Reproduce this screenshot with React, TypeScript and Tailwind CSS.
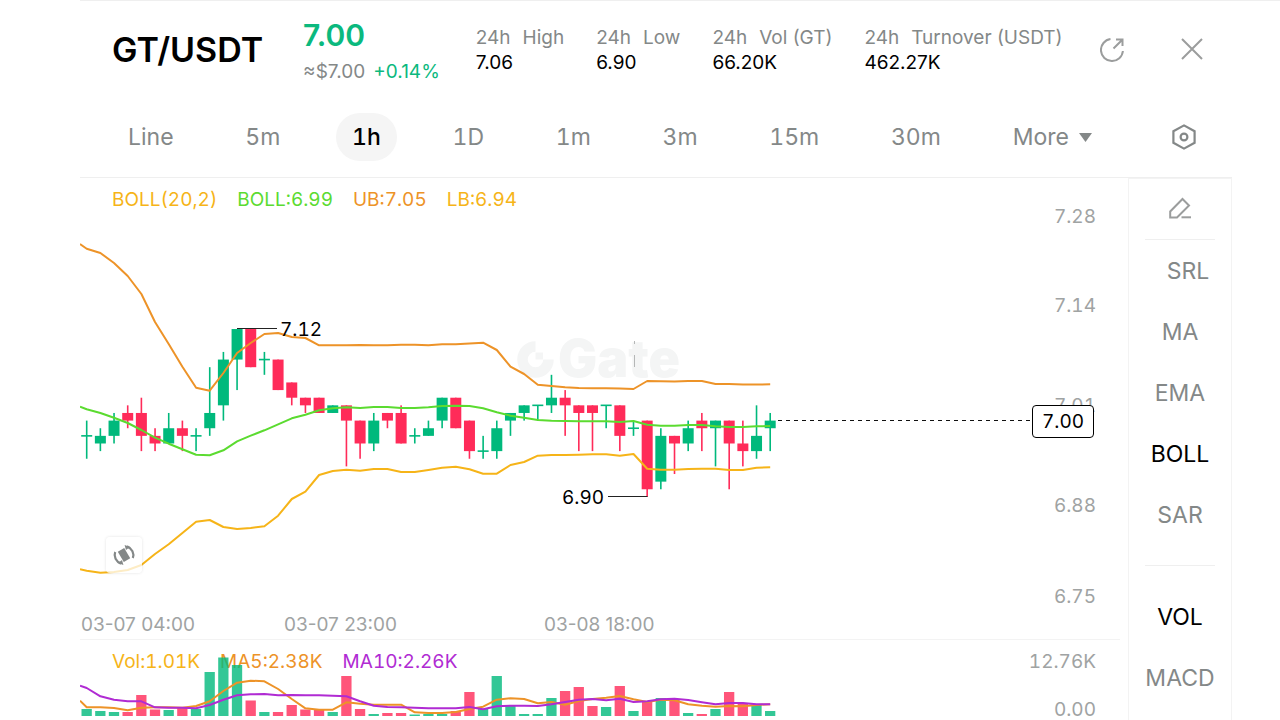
import { useState } from 'react'

// [open, close, high, low] in cents relative to 7.00
const CANDLES: [number, number, number, number][] = [
  [-2, -2, 0, -5], [-3, -2, -1, -4], [-2, 0, 1, -3], [1, 0, 2, -1], [1, -2, 3, -4],
  [-2, -3, -1, -4], [-3, -1, 1, -3], [-1, -2, 0, -4], [-2, -2, -1, -4], [-1, 1, 7, -2],
  [2, 8, 9, 0], [8, 12, 12, 4], [12, 7, 12, 7], [8, 8, 9, 6], [8, 4, 8, 4],
  [5, 3, 5, 2], [3, 2, 3, 1], [3, 1, 3, 1], [1, 2, 2, 1], [2, 0, 2, -6],
  [0, -3, 0, -5], [-3, 0, 1, -4], [1, 0, 1, -1], [1, -3, 2, -3], [-2, -2, -1, -3],
  [-2, -1, 0, -2], [0, 3, 3, -1], [3, -1, 3, -1], [0, -4, 0, -5], [-4, -4, -2, -5],
  [-4, -1, 0, -5], [0, 1, 1, -2], [1, 2, 2, 0], [2, 2, 2, 0], [2, 3, 6, 1],
  [3, 2, 4, -2], [2, 1, 2, -4], [2, 1, 2, -4], [2, 2, 2, -1], [2, -2, 2, -4],
  [-1, -1, 0, -2], [0, -9, 0, -10], [-8, -2, -1, -9], [-2, -3, -2, -7], [-3, -1, 0, -4],
  [0, -1, 1, -4], [-1, 0, 0, -6], [0, -3, 0, -9], [-3, -4, 0, -6], [-4, -2, 2, -5],
  [-1, 0, 1, -4],
]

// the first value of every line sits on the left edge, the rest on the candles
const UB = [66, 70.7, 75, 85, 98, 116, 144, 166, 188.7, 209.7, 212.7, 195, 175, 165, 156, 155, 159, 160, 167.3, 167.3, 167.3, 167, 167.3, 167.3, 166.7, 166.7, 167.3, 166.3, 166.3, 165.5, 164.7, 172, 188.7, 196, 206.7, 208, 209.3, 210, 210.3, 210.3, 210.5, 211, 203, 203.3, 203.5, 203, 203, 206, 206, 206.6, 206.6, 206.3]
const MID = [228.7, 231.3, 235, 239.7, 245, 252, 259.7, 265.7, 271.3, 276.7, 277.3, 272.3, 263.3, 257.7, 252.3, 246.3, 240.3, 236.7, 232.3, 230.3, 229.3, 230, 229, 229, 230, 230, 229.3, 228, 227.7, 228, 230.3, 234.3, 237.7, 239.7, 242, 242.7, 243, 243.3, 243.3, 243.3, 244, 243, 246.7, 247.7, 247.7, 247, 247, 248.3, 249, 249, 248.3, 248]
const LB = [391.3, 392.7, 394.7, 394, 392, 387, 376, 366.3, 355, 343.7, 342, 349, 351, 350, 348.3, 337.7, 321, 313.7, 297, 293, 291.7, 292.7, 291, 291, 294, 294, 292, 289.7, 288.7, 291.3, 295.7, 295.7, 287, 284, 277.7, 277, 277, 276.7, 276.3, 276.3, 277.7, 276, 290.7, 291.7, 291.7, 291, 290.7, 290.7, 292, 292, 289.7, 289.3]

const VOLUMES = [7, 5, 4, 4, 21, 6.5, 6, 8, 7, 44, 58.5, 51, 15.5, 4, 4, 11, 6.5, 6, 4, 40, 7, 2, 3, 3, 1.5, 2, 2, 5, 24, 7, 40, 10, 2, 2, 18, 25, 29, 10, 9, 30, 5, 14, 18, 16, 3, 2, 7, 24, 12, 11, 5]
const MA5 = [60.7, 67.3, 67.3, 68, 70.3, 67.7, 67.3, 67.3, 67.7, 66, 61.3, 51, 42.7, 40.7, 41.3, 49, 59, 68.3, 69.7, 69.7, 62.3, 63.7, 64.7, 64.7, 64.7, 72.3, 73, 73, 72, 69, 66.7, 59.7, 58.3, 59, 63.3, 62, 64.7, 61, 59, 57.7, 56, 59.3, 62, 59.7, 60.3, 64.3, 65.7, 66.7, 66, 66.3, 65, 64.3]
const MA10 = [45.7, 48, 56.3, 59.7, 61.3, 61.3, 67.3, 67.7, 67.7, 68.3, 65, 59.7, 55.3, 54.3, 54, 55.3, 55, 55.3, 55.3, 55.7, 56.3, 61.3, 65.7, 67, 67.3, 67.7, 68.3, 68.3, 68.3, 67, 69.3, 66.3, 65.7, 65.7, 66, 64.3, 62, 59.7, 59, 60.3, 58.7, 62, 61.3, 59.3, 58.7, 60, 62.3, 64.3, 63, 63, 64.3, 64.3]

const UP = '#00b97c'
const DOWN = '#ff2b59'
const STEP = 13.67

const xAt = (i: number) => 6.7 + i * STEP
const yAt = (cents: number) => 242.6 - cents * 7.63

function linePath(values: number[]): string {
  return values.map((y, i) => `${i === 0 ? `M0` : `L${xAt(i - 1).toFixed(1)}`} ${y}`).join('')
}

const INTERVALS = ['Line', '5m', '1h', '1D', '1m', '3m', '15m', '30m']
const MAIN_INDICATORS = ['SRL', 'MA', 'EMA', 'BOLL', 'SAR']
const SUB_INDICATORS = ['VOL', 'MACD']

const STATS = [
  { label: 'High', value: '7.06' },
  { label: 'Low', value: '6.90' },
  { label: 'Vol (GT)', value: '66.20K' },
  { label: 'Turnover (USDT)', value: '462.27K' },
]

const PRICE_TICKS = [
  { label: '7.28', y: 39 },
  { label: '7.14', y: 128 },
  { label: '7.01', y: 228 },
  { label: '6.88', y: 328 },
  { label: '6.75', y: 419 },
]

function ShareIcon() {
  return (
    <svg viewBox="0 0 24 24" className="size-6" fill="none" stroke="#9b9d9d" strokeWidth="2">
      <path d="M10.5 1.1A11 11 0 1 0 22.9 13" />
      <path d="M13.5 10.5 22.3 1.7M16 1.5h6.5V8" />
    </svg>
  )
}

function CloseIcon() {
  return (
    <svg viewBox="0 0 24 24" className="size-6" fill="none" stroke="#9b9d9d" strokeWidth="2">
      <path d="M2 1 22 21M22 1 2 21" />
    </svg>
  )
}

function SettingsIcon() {
  return (
    <svg viewBox="0 0 24 26" className="h-[26px] w-6" fill="none" stroke="#848888" strokeWidth="2.2">
      <path d="M12 1.4 22.6 7.2V18.8L12 24.6 1.4 18.8V7.2Z" />
      <circle cx="12" cy="13" r="3.4" />
    </svg>
  )
}

function PenIcon() {
  return (
    <svg viewBox="0 0 24 24" className="size-6" fill="none" stroke="#9b9d9d" strokeWidth="2">
      <path d="M2.2 20.5V14.5L14.5 2 21 8.5 9 20.5Z" />
      <path d="M13.5 20.3H23" />
    </svg>
  )
}

function RotateIcon() {
  return (
    <svg viewBox="0 0 24 24" className="size-6">
      <rect x="8.3" y="6" width="7.4" height="12" fill="#848888" transform="rotate(-30 12 12)" />
      <path d="M3.2 9C1.4 13.5 4 18.8 9 20.6" fill="none" stroke="#848888" strokeWidth="2.2" />
      <path d="M11.4 22 10 17 6 20Z" fill="#848888" />
      <path d="M20.8 15C22.6 10.5 20 5.2 15 3.4" fill="none" stroke="#848888" strokeWidth="2.2" />
      <path d="M12.6 2 14 7 18 4Z" fill="#848888" />
    </svg>
  )
}

function Watermark() {
  return (
    <div className="absolute top-[157px] left-[437px] flex items-center gap-1">
      <svg viewBox="0 0 37 37" className="size-[37px]">
        <path d="M18.5 5.5A13 13 0 1 0 31.5 18.5" fill="none" stroke="#f4f5f5" strokeWidth="10.5" />
        <path d="M18.5 11.5H26V18.5H18.5Z" fill="#f4f5f5" />
      </svg>
      <span className="text-[52px] leading-[48px] font-black text-[#f4f5f5]">Gate</span>
    </div>
  )
}

function CandleChart() {
  return (
    <svg className="absolute inset-0 h-full w-full">
      <path d="M554.5 163V166M554.5 177V189" stroke="#b5b7b7" />
      {CANDLES.map(([open, close, high, low], i) => {
        const color = close >= open ? UP : DOWN
        const top = yAt(Math.max(open, close))
        const height = Math.abs(open - close) * 7.63
        return (
          <g key={i} fill={color}>
            <rect x={xAt(i) - 0.8} y={yAt(high)} width={1.6} height={yAt(low) - yAt(high)} />
            <rect x={xAt(i) - 5.5} y={height ? top : top - 0.8} width={11} height={height || 1.6} />
          </g>
        )
      })}
      <g fill="none" strokeWidth="2" strokeLinejoin="round">
        <path d={linePath(LB)} stroke="#f6b418" />
        <path d={linePath(MID)} stroke="#5bdb30" />
        <path d={linePath(UB)} stroke="#ed9328" />
      </g>
      <path d="M157 150.5H197M528 318.5H567.5" stroke="#222" strokeWidth="1.2" />
      <line x1="698" y1="242.5" x2="100%" y2="242.5" stroke="#111" strokeWidth="1.2" strokeDasharray="4 4" />
    </svg>
  )
}

function VolumeChart() {
  return (
    <svg className="absolute inset-0 h-full w-full">
      {VOLUMES.map((v, i) => (
        <rect
          key={i}
          x={xAt(i) - 5.2}
          y={76 - v}
          width={10.3}
          height={v}
          fill={CANDLES[i][1] >= CANDLES[i][0] ? UP : DOWN}
          opacity={0.8}
        />
      ))}
      <g fill="none" strokeWidth="2" strokeLinejoin="round">
        <path d={linePath(MA5)} stroke="#ed9328" />
        <path d={linePath(MA10)} stroke="#b02bd3" />
      </g>
    </svg>
  )
}

function IndicatorButton({ name, active, onClick }: { name: string; active: boolean; onClick: () => void }) {
  return (
    <button
      onClick={onClick}
      className={`h-[61px] pt-0.5 text-center text-[23px] ${active ? 'text-black' : 'text-[#848888]'} ${name === 'SRL' ? 'pl-4' : ''}`}
    >
      {name}
    </button>
  )
}

export default function App() {
  const [interval, setInterval] = useState('1h')
  const [overlay, setOverlay] = useState('BOLL')
  const [sub, setSub] = useState('VOL')

  return (
    <div className="flex min-h-screen bg-white pl-20 font-['Inter','Liberation_Sans',sans-serif] text-[#848888]">
      <div className="flex flex-1 flex-col border-t border-[#efefef] pr-12">
        <header className="border-b border-[#efefef]">
          <div className="flex h-24 items-center pt-0.5 pr-7 pl-8">
            <h1 className="text-[34px] leading-10 font-semibold text-black">GT/USDT</h1>
            <div className="ml-10">
              <div className="text-[30px] leading-[42px] font-semibold text-[#0bb97e]">7.00</div>
              <div className="mt-0.5 flex gap-2 text-[19px] leading-7">
                <span>≈$7.00</span>
                <span className="text-[#0bb97e]">+0.14%</span>
              </div>
            </div>
            <dl className="ml-9 flex gap-8 text-[19px] leading-[25px] whitespace-nowrap">
              {STATS.map(s => (
                <div key={s.label}>
                  <dt className="flex gap-3"><span>24h</span><span>{s.label}</span></dt>
                  <dd className="text-black">{s.value}</dd>
                </div>
              ))}
            </dl>
            <div className="ml-auto flex gap-14">
              <button aria-label="Share"><ShareIcon /></button>
              <button aria-label="Close"><CloseIcon /></button>
            </div>
          </div>
          <div className="flex items-center gap-16 py-4 pr-9 pl-8">
            <nav className="flex flex-1 justify-between text-[23px] tabular-nums">
              {INTERVALS.map(name => (
                <button
                  key={name}
                  onClick={() => setInterval(name)}
                  className={`h-12 rounded-full px-4 ${interval === name ? 'bg-[#f5f5f5] font-medium text-black' : ''}`}
                >
                  {name}
                </button>
              ))}
              <button className="flex h-12 items-center gap-2.5 px-4">
                More
                <svg viewBox="0 0 13 9" className="h-[9px] w-[13px]"><path d="M0 0H13L6.5 9Z" fill="#848888" /></svg>
              </button>
            </nav>
            <button aria-label="Chart settings"><SettingsIcon /></button>
          </div>
        </header>

        <div className="flex flex-1">
          <main className="flex flex-1 flex-col text-[19px] tabular-nums">
            <section className="relative mr-2 h-[462px] border-b border-[#f3f3f3]">
              <div className="absolute inset-y-0 right-6 left-0">
                <Watermark />
                <CandleChart />
                {PRICE_TICKS.map(t => (
                  <span key={t.label} className="absolute right-0 -translate-y-1/2 text-[#a0a3a3]" style={{ top: t.y }}>{t.label}</span>
                ))}
                <span className="absolute top-[227px] right-0.5 flex h-[33px] w-[62px] items-center justify-center rounded border border-black bg-white pt-0.5 text-black">7.00</span>
                <span className="absolute top-[138px] left-[200px] text-black">7.12</span>
                <span className="absolute top-[306px] left-[482px] text-black">6.90</span>
              </div>
              <div className="relative flex gap-5 pt-2 pl-8 leading-7">
                <span className="text-[#f6b418]">BOLL(20,2)</span>
                <span className="text-[#5bdb30]">BOLL:6.99</span>
                <span className="text-[#ed9328]">UB:7.05</span>
                <span className="text-[#f6b418]">LB:6.94</span>
              </div>
              <button aria-label="Rotate" className="absolute top-[359px] left-[26px] flex size-9 items-center justify-center rounded bg-white/75 shadow-[0_0_3px_rgba(0,0,0,0.12)]">
                <RotateIcon />
              </button>
              <div className="absolute bottom-0 left-0 leading-7 text-[#a0a3a3] proportional-nums">
                <span className="absolute bottom-0 left-px whitespace-nowrap">03-07 04:00</span>
                <span className="absolute bottom-0 left-[204px] whitespace-nowrap">03-07 23:00</span>
                <span className="absolute bottom-0 left-[464px] whitespace-nowrap">03-08 18:00</span>
              </div>
            </section>

            <section className="relative flex h-20 justify-between overflow-hidden pr-8 pl-8">
              <div className="flex gap-5 pt-2 leading-7">
                <span className="text-[#f6b418]">Vol:1.01K</span>
                <span className="text-[#ed9328]">MA5:2.38K</span>
                <span className="text-[#b02bd3]">MA10:2.26K</span>
              </div>
              <div className="flex flex-col justify-between pt-2 text-right leading-7 text-[#a0a3a3]">
                <span>12.76K</span>
                <span className="-mb-1">0.00</span>
              </div>
              <VolumeChart />
            </section>
          </main>

          <aside className="flex w-[104px] flex-col border border-b-0 border-[#f3f3f3]">
            <button aria-label="Draw" className="flex h-[60px] items-center justify-center"><PenIcon /></button>
            <hr className="mx-4 border-[#efefef]" />
            {MAIN_INDICATORS.map(name => (
              <IndicatorButton key={name} name={name} active={overlay === name} onClick={() => setOverlay(name)} />
            ))}
            <hr className="mx-4 my-5 border-[#efefef]" />
            {SUB_INDICATORS.map(name => (
              <IndicatorButton key={name} name={name} active={sub === name} onClick={() => setSub(name)} />
            ))}
          </aside>
        </div>
      </div>
    </div>
  )
}
